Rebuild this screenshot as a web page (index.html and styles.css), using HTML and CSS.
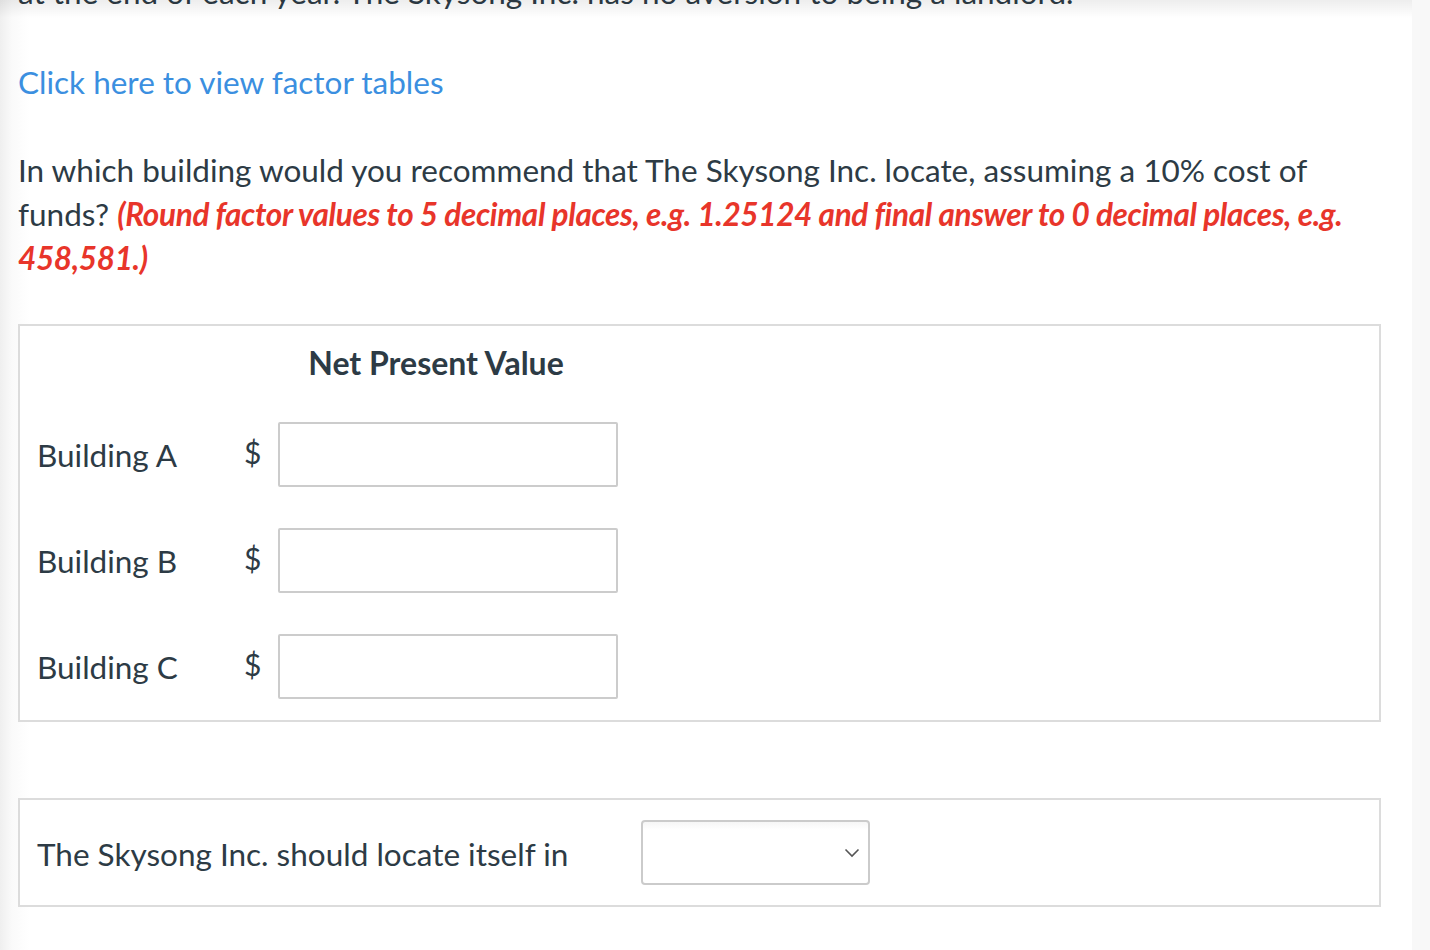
FILE: index.html
```html
<!DOCTYPE html>
<html>
<head>
<meta charset="utf-8">
<link rel="stylesheet" href="styles.css">
</head>
<body>
<div class="page">
  <div class="main">
    <div class="top-shadow"></div>
    <p class="intro">at the end of each year. The Skysong Inc. has no aversion to being a landlord.</p>
    <p class="link-line"><a class="link" href="#">Click here to view factor tables</a></p>
    <p class="question">In which building would you recommend that The Skysong Inc. locate, assuming a 10% cost of funds? <em class="note">(Round factor values to 5 decimal places, e.g. 1.25124 and final answer to 0 decimal places, e.g. 458,581.)</em></p>

    <div class="box npv">
      <div class="npv-head">Net Present Value</div>
      <div class="row">
        <span class="label">Building A</span>
        <span class="dollar">$</span>
        <input class="field" type="text">
      </div>
      <div class="row">
        <span class="label">Building B</span>
        <span class="dollar">$</span>
        <input class="field" type="text">
      </div>
      <div class="row">
        <span class="label">Building C</span>
        <span class="dollar">$</span>
        <input class="field" type="text">
      </div>
    </div>

    <div class="box locate">
      <span class="label locate-label">The Skysong Inc. should locate itself in</span>
      <div class="select">
        <svg class="chev" width="16" height="10" viewBox="0 0 16 10"><path d="M1.5 1.5 L8 8 L14.5 1.5" fill="none" stroke="#555" stroke-width="1.6"/></svg>
      </div>
    </div>
  </div>
  <div class="strip"></div>
</div>
</body>
</html>
```

FILE: styles.css
```css
html, body {
  margin: 0;
  padding: 0;
  height: 100%;
  overflow: hidden;
}
body {
  font-family: Lato, "Open Sans", sans-serif;
  color: #2d3b45;
  background: #fff;
}
.page {
  display: flex;
  min-height: 950px;
}
.main {
  flex: 1;
  position: relative;
  padding-left: 18px;
  padding-right: 30px;
  background: linear-gradient(to right, #efefef 0, #fafafa 12px, #fff 30px);
}
.strip {
  width: 18px;
  background: #f8f8f8;
}
.top-shadow {
  position: absolute;
  left: 0;
  right: 0;
  top: 0;
  height: 18px;
  background: linear-gradient(to bottom, rgba(0,0,0,0.07), rgba(0,0,0,0));
  pointer-events: none;
}
p {
  margin: 0;
}
.intro {
  font-size: 31.5px;
  line-height: 44px;
  margin-top: -30px;
  white-space: nowrap;
}
.link-line {
  font-size: 31.5px;
  line-height: 44px;
  margin-top: 46px;
}
.link {
  color: #3b8fe0;
  text-decoration: none;
}
.question {
  font-size: 31.5px;
  line-height: 44px;
  margin-top: 44px;
  padding-right: 20px;
}
.note {
  color: #e8352a;
  font-weight: bold;
  font-style: italic;
  letter-spacing: -0.35px;
}
.box {
  border: 2px solid #dcdcdc;
  background: #fff;
  margin-right: 1px;
}
.npv {
  margin-top: 44px;
  padding: 17px 0 21px 17px;
  display: grid;
  grid-template-columns: 207px 34px 340px;
  row-gap: 41px;
}
.npv-head {
  grid-column: 2 / 4;
  text-align: center;
  font-weight: bold;
  font-size: 32px;
  line-height: 40px;
  margin-bottom: -2px;
  padding-left: 10px;
}
.row {
  display: contents;
}
.label {
  font-size: 31.5px;
  align-self: center;
}
.dollar {
  font-size: 30px;
  align-self: center;
  margin-top: -6px;
}
.field {
  height: 65px;
  box-sizing: border-box;
  border: 2px solid #cccccc;
  border-radius: 2px;
  margin: 0;
  padding: 0 10px;
  font-size: 24px;
}
.locate {
  margin-top: 76px;
  height: 109px;
  box-sizing: border-box;
  display: flex;
  align-items: center;
  padding-left: 17px;
}
.locate-label {
  width: 604px;
  padding-top: 2px;
}
.select {
  width: 229px;
  height: 65px;
  box-sizing: border-box;
  border: 2px solid #cbcbcb;
  border-radius: 4px;
  display: flex;
  align-items: center;
  justify-content: flex-end;
  padding-right: 8px;
  background: linear-gradient(to bottom, #f6f6f6 0, #fff 8px);
}
.chev {
  display: block;
}
```
